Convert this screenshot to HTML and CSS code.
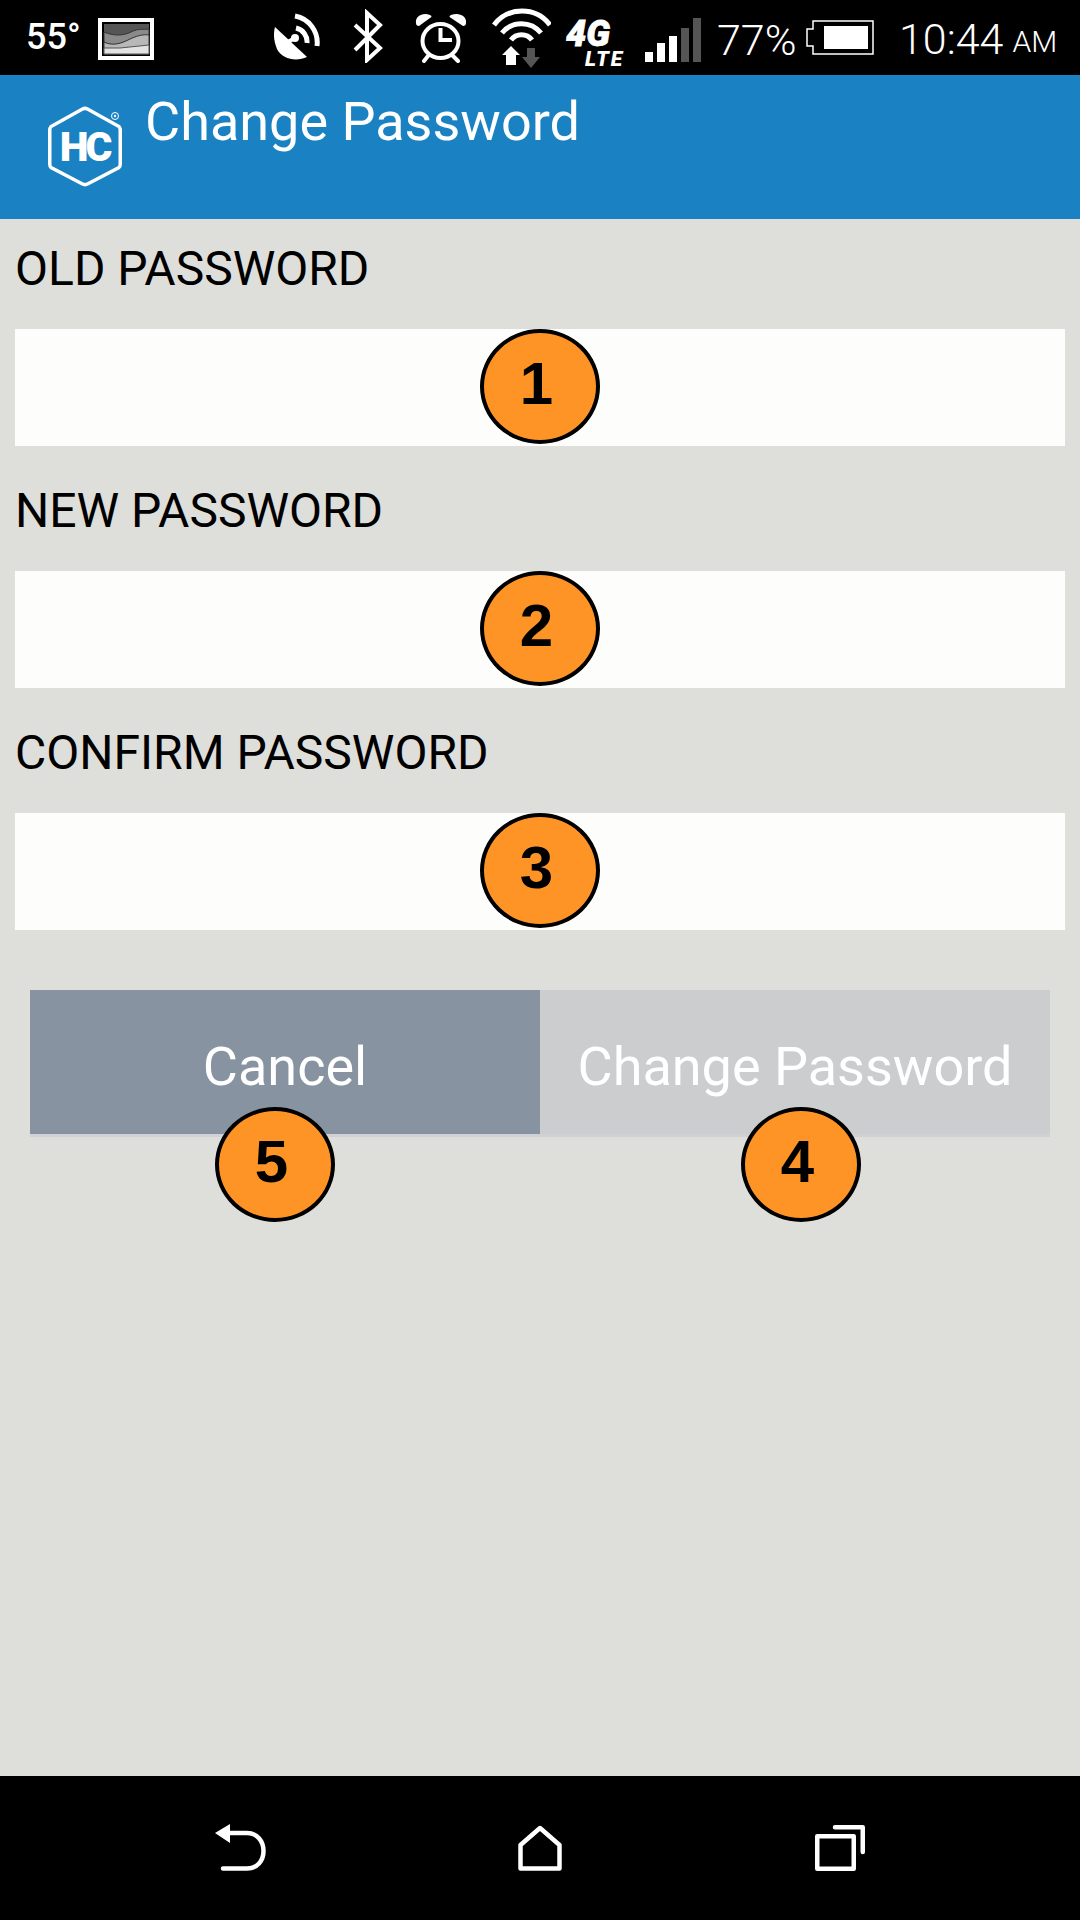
FILE: index.html
```html
<!DOCTYPE html>
<html lang="en">
<head>
<meta charset="UTF-8">
<meta name="viewport" content="width=device-width, initial-scale=1.0">
<title>Change Password</title>
<link rel="stylesheet" href="styles.css">
</head>
<body>
<div class="status-bar">
  <span class="temp">55°</span>
  <svg class="ic-weather" width="56" height="42" viewBox="0 0 56 42">
    <rect x="2" y="2" width="52" height="38" fill="#000" stroke="#fff" stroke-width="4"/>
    <rect x="6" y="6" width="45" height="30" fill="#555"/>
    <path d="M6 14 C15 18 25 18 33 14 S45 12 51 11 V36 H6Z" fill="#8a8a8a" stroke="#333"/>
    <path d="M6 24 C14 28 22 26 30 22 S45 16 51 17 V36 H6Z" fill="#b8b8b8" stroke="#333"/>
    <path d="M6 30 H22 L51 27 V36 H6Z" fill="#e2e2e2" stroke="#555"/>
  </svg>
  <svg class="ic-sat" width="46" height="47" viewBox="0 0 46 47">
    <path d="M1 14 L33 44 C22 49 8 46 3 36 C0 29 -1 21 1 14Z" fill="#fff"/>
    <path d="M12 30 L21 25" stroke="#fff" stroke-width="4"/>
    <circle cx="21" cy="25" r="4" fill="#fff"/>
    <path d="M22 15 A14 14 0 0 1 33 30 M21 3 A27 27 0 0 1 43 33" fill="none" stroke="#fff" stroke-width="5"/>
  </svg>
  <svg class="ic-bt" width="30" height="54" viewBox="0 0 30 54">
    <path d="M2 16 L27 39 L14 51 V4 L27 16 L2 41" fill="none" stroke="#fff" stroke-width="4"/>
  </svg>
  <svg class="ic-alarm" width="52" height="51" viewBox="0 0 52 51">
    <ellipse cx="25.500" cy="29" rx="18" ry="17" fill="none" stroke="#fff" stroke-width="4"/>
    <path d="M25.500 16 V28 H37" fill="none" stroke="#fff" stroke-width="4"/>
    <path d="M1 11 C0 4 8 0 15 3 C17 4 17 5 15 6 L4 14 C2 14 1 13 1 11Z M51 11 C52 4 44 0 36 3 C34 4 34 5 36 6 L48 14 C50 14 51 13 51 11Z" fill="#fff"/>
    <path d="M13 44 L9 49 M38 44 L43 49" stroke="#fff" stroke-width="4" stroke-linecap="round"/>
  </svg>
  <svg class="ic-wifi" width="60" height="60" viewBox="0 0 60 60">
    <path d="M3 17 A35 35 0 0 1 59 17 M11 25 A25 25 0 0 1 50 25 M20 32 A13 13 0 0 1 41 32" fill="none" stroke="#fff" stroke-width="5"/>
    <path d="M20 38 L29 47 H25 V57 H15 V47 H11Z" fill="#fff"/>
    <path d="M36 40 H44 V49 H49 L40 60 L31 49 H36Z" fill="#555"/>
  </svg>
  <span class="lte"><span class="lte-big">4G</span><span class="lte-small">LTE</span></span>
  <svg class="ic-signal" width="56" height="44" viewBox="0 0 56 44">
    <rect x="0" y="34" width="8" height="10" fill="#fff"/>
    <rect x="12" y="25" width="8" height="19" fill="#fff"/>
    <rect x="24" y="18" width="8" height="26" fill="#fff"/>
    <rect x="36" y="10" width="8" height="34" fill="#555"/>
    <rect x="48" y="0" width="8" height="44" fill="#555"/>
  </svg>
  <span class="percent">77%</span>
  <svg class="ic-battery" width="68" height="35" viewBox="0 0 68 35">
    <path d="M7 1 H67 V34 H7 V26 H1 V9 H7Z" fill="none" stroke="#fff" stroke-width="1.5"/>
    <rect x="18" y="6" width="44" height="23" fill="#fff"/>
  </svg>
  <span class="clock">10:44</span>
  <span class="ampm">AM</span>
</div>

<header class="app-header">
  <svg class="logo" width="78" height="84" viewBox="0 0 78 84">
    <path d="M34.500 3 Q37 1.750 39.500 3 L71 20.500 Q72.250 22 72.250 24 V58 Q72.250 60.500 71 61.500 L39.500 78 Q37 79.250 34.500 78 L3 61.500 Q1.750 60.500 1.750 58 V24 Q1.750 22 3 20.500Z" fill="none" stroke="#fff" stroke-width="3.500"/>
    <circle cx="67" cy="10" r="3.500" fill="none" stroke="#fff"/>
    <circle cx="67" cy="10" r="1.200" fill="#fff"/>
    <text class="logo-text" x="36.500" y="55" text-anchor="middle">HC</text>
  </svg>
  <h1 class="app-title">Change Password</h1>
</header>

<main class="content">
  <div class="field">
    <label class="field-label">OLD PASSWORD</label>
    <div class="field-input"><span class="callout">1</span></div>
  </div>
  <div class="field">
    <label class="field-label">NEW PASSWORD</label>
    <div class="field-input"><span class="callout">2</span></div>
  </div>
  <div class="field">
    <label class="field-label">CONFIRM PASSWORD</label>
    <div class="field-input"><span class="callout">3</span></div>
  </div>
  <div class="buttons">
    <div class="btn btn-cancel">Cancel<span class="callout callout-btn">5</span></div>
    <div class="btn btn-change">Change Password<span class="callout callout-btn">4</span></div>
  </div>
</main>

<nav class="nav-bar">
  <svg width="60" height="50" viewBox="0 0 60 50">
    <path d="M5 10 L20 1 V20Z" fill="#fff"/>
    <path d="M18 10 H37 C47 10 53.500 18 53.500 28 C53.500 38 47 45.500 37 45.500 H13" fill="none" stroke="#fff" stroke-width="4.500" stroke-linecap="round"/>
  </svg>
  <svg width="60" height="50" viewBox="0 0 60 50">
    <path d="M30 5 L49.500 22 V45.500 H10.500 V22Z" fill="none" stroke="#fff" stroke-width="4.500" stroke-linejoin="round"/>
  </svg>
  <svg width="60" height="50" viewBox="0 0 60 50">
    <rect x="7.250" y="13.250" width="36.500" height="32.500" fill="none" stroke="#fff" stroke-width="4.500" stroke-linejoin="round"/>
    <path d="M25 4.250 H52.750 V29" fill="none" stroke="#fff" stroke-width="4.500" stroke-linecap="round" stroke-linejoin="round"/>
  </svg>
</nav>
</body>
</html>
```

FILE: styles.css
```css
html, body {
  margin: 0;
  padding: 0;
}
body {
  width: 1080px;
  height: 1920px;
  display: flex;
  flex-direction: column;
  font-family: Roboto, sans-serif;
  background-color: #dededa;
  overflow: hidden;
}

/* status bar */
.status-bar {
  height: 75px;
  flex: none;
  background-color: #000;
  color: #fff;
  display: flex;
  align-items: flex-start;
  padding-left: 26px;
  box-sizing: border-box;
}
.status-bar svg {
  display: block;
  flex: none;
}
.temp {
  width: 72px;
  margin-top: 17px;
  font-size: 36px;
  line-height: 41px;
  font-weight: 500;
}
.ic-weather { margin-top: 18px; }
.ic-sat { margin: 13px 0 0 120px; }
.ic-bt { margin: 9px 0 0 33px; }
.ic-alarm { margin: 12px 0 0 32px; }
.ic-wifi { margin: 8px 0 0 24px; }
.lte {
  width: 58px;
  margin: 18px 0 0 15px;
  display: flex;
  flex-direction: column;
  font-style: italic;
  font-weight: 900;
}
.lte-big {
  font-size: 36px;
  line-height: 32px;
  -webkit-text-stroke: 0.8px #fff;
}
.lte-small {
  font-size: 21px;
  line-height: 18px;
  margin-left: 19px;
  letter-spacing: 2px;
}
.ic-signal { margin: 18px 0 0 21px; }
.percent {
  margin: 16px 0 0 16px;
  width: 78px;
  font-size: 43px;
  line-height: 48px;
  font-weight: 300;
}
.ic-battery { margin: 20px 0 0 11px; }
.clock {
  margin: 15px 0 0 25px;
  font-size: 43px;
  line-height: 48px;
  font-weight: 300;
}
.ampm {
  margin: 25px 0 0 9px;
  font-size: 30px;
  line-height: 34px;
  font-weight: 300;
}

/* app header */
.app-header {
  height: 144px;
  flex: none;
  background-color: #1a82c3;
  color: #fff;
  display: flex;
  align-items: flex-start;
  padding-left: 48px;
  box-sizing: border-box;
}
.logo {
  display: block;
  margin-top: 31px;
}
.logo-text {
  font-family: Roboto, sans-serif;
  font-weight: 900;
  font-size: 41px;
  letter-spacing: -3px;
  fill: #fff;
}
.app-title {
  margin: 17px 0 0 19px;
  font-size: 54px;
  line-height: 60px;
  font-weight: 400;
}

/* form */
.content {
  flex: 1;
  padding: 0 15px;
}
.field + .field {
  margin-top: 15px;
}
.field-label {
  display: block;
  height: 110px;
  padding-top: 22px;
  box-sizing: border-box;
  font-size: 48px;
  line-height: 56px;
  color: #000;
}
.field-input {
  height: 117px;
  background-color: #fdfdfb;
  position: relative;
}
.callout {
  position: absolute;
  left: 465px;
  top: 0;
  width: 120px;
  height: 115px;
  box-sizing: border-box;
  border: 4px solid #000;
  border-radius: 50%;
  background-color: #ff9426;
  color: #000;
  font-family: "Liberation Sans", Arial, sans-serif;
  font-weight: 700;
  font-size: 60px;
  line-height: 102px;
  text-align: center;
  padding-right: 7px;
}

.buttons {
  margin: 60px 15px 0;
  display: flex;
}
.btn {
  width: 50%;
  height: 147px;
  box-sizing: border-box;
  border-bottom: 3px solid #d0d1d5;
  position: relative;
  text-align: center;
  color: #fff;
  font-size: 54px;
  line-height: 153px;
}
.btn-cancel { background-color: #8793a0; }
.btn-change { background-color: #cccdcf; }
.callout-btn { top: 117px; }
.btn-cancel .callout-btn { left: 185px; }
.btn-change .callout-btn { left: 201px; }

/* nav bar */
.nav-bar {
  height: 144px;
  flex: none;
  background-color: #000;
  padding: 0 90px;
  display: grid;
  grid-template-columns: repeat(3, 1fr);
  align-items: center;
  justify-items: center;
}
```
